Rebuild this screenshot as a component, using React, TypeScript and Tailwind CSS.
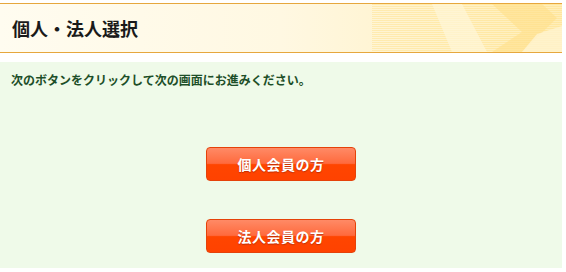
const JP = { fontFamily: '"Noto Sans CJK JP", "Noto Sans", sans-serif' }

function MemberButton({ label }: { label: string }) {
  return (
    <button
      className="w-[150px] h-[34px] rounded-[4px] border border-[#e5420a] text-white text-[14px] font-bold tracking-[0.5px] flex items-center justify-center [text-shadow:0_1px_1px_rgba(150,30,0,0.6)] bg-[linear-gradient(#ff8a66_0%,#ff6a3d_48%,#ff4500_52%,#ff4200_100%)]"
      style={JP}
    >
      {label}
    </button>
  )
}

export default function App() {
  return (
    <div className="w-[566px] h-[272px] bg-white pt-[3px] pr-[4px]" style={JP}>
      {/* Header */}
      <div className="relative h-[50px] border-y border-[#e6a73d] overflow-hidden bg-[linear-gradient(90deg,#fffcf0_0%,#fff8e2_50%,#ffeeb8_100%)]">
        <svg className="absolute right-0 top-0 h-full w-[190px]" viewBox="0 0 190 48" preserveAspectRatio="none">
          <defs>
            <pattern id="stripes" width="4" height="2" patternUnits="userSpaceOnUse">
              <rect width="4" height="1" fill="#ffd870" opacity="0.6" />
            </pattern>
          </defs>
          <rect x="0" y="0" width="190" height="48" fill="url(#stripes)" opacity="0.6" />
          <polygon points="60,0 90,0 115,48 80,48" fill="#fff6d8" opacity="0.7" />
          <polygon points="120,0 170,0 185,14 150,48 120,48 150,28" fill="#ffe08a" opacity="0.6" />
          <polygon points="165,30 190,22 190,48 150,48" fill="#fff4d0" opacity="0.8" />
        </svg>
        <h1 className="relative pl-[12px] leading-[48px] text-[18px] font-bold text-[#1a1a1a]">個人・法人選択</h1>
      </div>

      {/* Body */}
      <div className="mt-[9px] h-[206px] bg-[#effae9] pt-[9px]">
        <p className="pl-[11px] text-[12px] font-bold text-[#1d4f28] leading-[17px]">
          次のボタンをクリックして次の画面にお進みください。
        </p>
        <div className="flex flex-col items-center gap-[38px] mt-[59px]">
          <MemberButton label="個人会員の方" />
          <MemberButton label="法人会員の方" />
        </div>
      </div>
    </div>
  )
}
